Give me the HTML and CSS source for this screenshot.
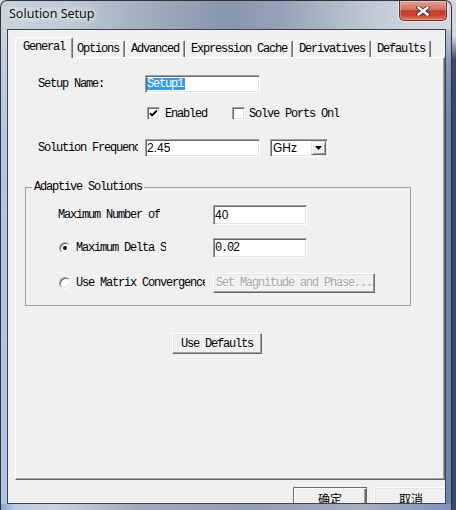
FILE: index.html
```html
<!DOCTYPE html>
<html lang="en">
<head>
  <meta charset="UTF-8" />
  <title>Solution Setup</title>
  <link rel="stylesheet" href="styles.css">
</head>
<body>

  <div class="window">
    <div class="titlebar">
      <span class="title">Solution Setup</span>
      <span class="close">
        <svg width="14" height="10" viewBox="0 0 14 10">
          <path d="M2.5 1.5 L11.5 8.5 M11.5 1.5 L2.5 8.5" stroke="#3c3c3c" stroke-width="4.2" stroke-linecap="square"/>
          <path d="M2.5 1.5 L11.5 8.5 M11.5 1.5 L2.5 8.5" stroke="#fff" stroke-width="2.4" stroke-linecap="square"/>
        </svg>
      </span>
    </div>

    <div class="frame-body">
      <div class="side-left"></div>

      <div class="client">
        <div class="tabs">
          <div class="tab active">General</div>
          <div class="tab">Options</div>
          <div class="tab">Advanced</div>
          <div class="tab">Expression Cache</div>
          <div class="tab">Derivatives</div>
          <div class="tab">Defaults</div>
        </div>

        <div class="panel">
          <div class="row r-name">
            <span class="lbl">Setup Name:</span>
            <div class="edit w115"><span class="sel">Setup1</span></div>
          </div>

          <div class="row r-checks">
            <span class="check on">
              <svg width="11" height="11" viewBox="0 0 11 11"><polyline points="2,5 4,7.5 9,2.5" fill="none" stroke="#000" stroke-width="1.8"/></svg>
            </span>
            <span>Enabled</span>
            <span class="check second"></span>
            <span class="clip">Solve Ports Onl</span>
          </div>

          <div class="row r-freq">
            <span class="lbl clip w100">Solution Frequenc</span>
            <div class="edit w115"><span class="sans">2.45</span></div>
            <div class="combo">
              <span class="sans">GHz</span>
              <span class="drop">
                <svg width="7" height="4" viewBox="0 0 7 4"><polygon points="0,0 7,0 3.5,4" fill="#000"/></svg>
              </span>
            </div>
          </div>

          <fieldset class="group">
            <legend>Adaptive Solutions</legend>

            <div class="row g-row ga">
              <div class="opt"><span class="clip">Maximum Number of</span></div>
              <div class="edit w94 h20"><span class="sans">40</span></div>
            </div>

            <div class="row g-row gb">
              <div class="opt">
                <span class="radio on"></span>
                <span class="clip">Maximum Delta S</span>
              </div>
              <div class="edit w94 h20"><span>0.02</span></div>
            </div>

            <div class="row g-row gc">
              <div class="opt">
                <span class="radio"></span>
                <span class="clip w129">Use Matrix Convergence</span>
              </div>
              <button class="btn btn-disabled">Set Magnitude and Phase...</button>
            </div>
          </fieldset>

          <button class="btn btn-defaults">Use Defaults</button>
        </div>

        <div class="dlg">
          <button class="btn btn-default zh">确定</button>
          <button class="btn zh">取消</button>
        </div>
      </div>

      <div class="side-right"></div>
    </div>

    <div class="frame-bottom"></div>
  </div>

</body>
</html>
```

FILE: styles.css
```css
* {
  box-sizing: border-box;
}

body {
  margin: 0;
  width: 456px;
  height: 510px;
  overflow: hidden;
  background: linear-gradient(#d3d8de 0, #d3d8de 36px, #3b4564 60px, #3b4564 100%);
  font-family: "Liberation Mono", monospace;
  font-size: 12px;
  letter-spacing: -1.2px;
  color: #000;
}

/* window frame */
.window {
  width: 452px;
  height: 510px;
  display: flex;
  flex-direction: column;
  border: 1px solid #2f343c;
  border-bottom: none;
  border-radius: 7px 7px 0 0;
  overflow: hidden;
  background: linear-gradient(90deg, #c9d2dc 0%, #bfc9d4 15%, #9ca9bb 35%, #8896ad 50%, #95a2b6 62%, #b7c1cd 78%, #ccd4dd 90%, #d4dae1 100%);
}

.titlebar {
  display: flex;
  height: 28px;
  flex-shrink: 0;
}

.title {
  margin: 5px 0 0 8px;
  font-family: "Noto Sans", sans-serif;
  font-size: 12.5px;
  line-height: 16px;
  letter-spacing: 0;
  color: #101010;
  text-shadow: 0 0 6px #fff, 0 0 10px rgba(255, 255, 255, 0.9);
}

.close {
  margin-left: auto;
  margin-right: 4px;
  width: 48px;
  height: 20px;
  display: flex;
  align-items: center;
  justify-content: center;
  border: 1px solid #6e2a1f;
  border-top: none;
  border-radius: 0 0 5px 5px;
  background: linear-gradient(#e6a497, #d66f5c 45%, #c13d27 52%, #c6452e 75%, #dc7a56);
  box-shadow: 0 0 0 1px rgba(255, 255, 255, 0.5), inset 0 0 0 1px rgba(255, 255, 255, 0.25);
}

.close svg {
  display: block;
}

.frame-body {
  display: flex;
  flex: 1;
  min-height: 0;
}

.side-left {
  width: 6px;
  flex-shrink: 0;
  background: linear-gradient(#c8d2dc, #b4c8df 20%, #abc4e2);
}

.side-right {
  width: 5px;
  flex-shrink: 0;
  background: linear-gradient(#b9c3d2, #7f93bd 8%, #6d83b2 20%, #6d83b2);
}

.frame-bottom {
  height: 6px;
  flex-shrink: 0;
  background: linear-gradient(90deg, #8aa6c8 0, #b9cbe0 3%, #c9d3de 12%, #9fabbd 30%, #8f9db3 55%, #a4b0c1 80%, #7f93bb 100%);
}

.client {
  width: 439px;
  flex-shrink: 0;
  border: 1px solid #3c4350;
  background: #f0f0f0;
  overflow: hidden;
}

/* tabs */
.tabs {
  display: flex;
  align-items: flex-end;
  height: 20px;
  margin: 7px 0 0 9px;
}

.tab {
  flex-shrink: 0;
  height: 17px;
  padding: 0 5px;
  line-height: 16px;
  white-space: nowrap;
  border-top: 1px solid #fff;
  border-left: 1px solid #fff;
  border-right: 1px solid #696969;
  border-radius: 2px 2px 0 0;
  box-shadow: inset -1px 0 #a0a0a0;
  background: #f0f0f0;
}

.tab.active {
  position: relative;
  z-index: 1;
  height: 21px;
  margin: 0 -2px -1px;
  padding: 0 7px;
  line-height: 18px;
}

.panel {
  margin-left: 7px;
  width: 430px;
  height: 423px;
  border: 1px solid;
  border-color: #fff #696969 #696969 #fff;
  box-shadow: inset -1px -1px #a0a0a0;
}

/* form rows */
.row {
  display: flex;
  align-items: center;
}

.r-name {
  margin: 17px 0 0 22px;
  height: 18px;
}

.r-checks {
  margin: 14px 0 0 131px;
  height: 13px;
}

.r-freq {
  margin: 19px 0 0 22px;
  height: 18px;
}

.lbl {
  width: 107px;
  flex-shrink: 0;
}

.lbl.clip {
  width: 100px;
  margin-right: 7px;
}

.clip {
  overflow: hidden;
  white-space: nowrap;
  flex-shrink: 0;
}

.w100 { width: 100px; }
.w129 { width: 129px; }

.sans {
  font-family: "Liberation Sans", Arial, sans-serif;
  letter-spacing: 0;
}

.edit {
  display: flex;
  align-items: center;
  height: 18px;
  padding-left: 1px;
  background: #fff;
  border: 1px solid;
  border-color: #a0a0a0 #fff #fff #a0a0a0;
  box-shadow: inset 1px 1px #696969, inset -1px -1px #e3e3e3;
  white-space: nowrap;
  flex-shrink: 0;
}

.w115 { width: 115px; }
.w94 { width: 94px; }
.h20 { height: 20px; }

.sel {
  background: #3399ff;
  color: #fff;
  line-height: 12px;
  padding-right: 2px;
}

.check {
  width: 13px;
  height: 13px;
  margin-right: 5px;
  display: flex;
  align-items: center;
  justify-content: center;
  background: #fff;
  border: 1px solid;
  border-color: #a0a0a0 #fff #fff #a0a0a0;
  box-shadow: inset 1px 1px #696969, inset -1px -1px #e3e3e3;
}

.check.second {
  margin-left: 25px;
  margin-right: 4px;
}

.radio {
  width: 12px;
  height: 12px;
  margin: 0 5px 0 1px;
  flex-shrink: 0;
  display: flex;
  align-items: center;
  justify-content: center;
  border-radius: 50%;
  background: #fff;
  border: 1px solid;
  border-color: #a0a0a0 #fff #fff #a0a0a0;
  box-shadow: inset 1px 1px #696969, inset -1px -1px #e3e3e3;
}

.radio.on::after {
  content: "";
  width: 4px;
  height: 4px;
  border-radius: 50%;
  background: #000;
}

.combo {
  display: flex;
  align-items: center;
  margin-left: 10px;
  width: 58px;
  height: 18px;
  padding-left: 2px;
  background: #fff;
  border: 1px solid;
  border-color: #a0a0a0 #fff #fff #a0a0a0;
  box-shadow: inset 1px 1px #696969, inset -1px -1px #e3e3e3;
}

.drop {
  margin: 0 1px 0 auto;
  width: 15px;
  height: 14px;
  display: flex;
  align-items: center;
  justify-content: center;
  background: #f0f0f0;
  border: 1px solid;
  border-color: #e3e3e3 #696969 #696969 #e3e3e3;
  box-shadow: inset 1px 1px #fff, inset -1px -1px #a0a0a0;
}

.drop svg {
  display: block;
}

/* group box */
.group {
  margin: 23px 0 0 9px;
  width: 386px;
  min-width: 0;
  padding: 0 0 12px;
  border: 1px solid #a0a0a0;
}

.group legend {
  margin-left: 6px;
  padding: 0 2px;
  line-height: 14px;
}

.g-row {
  margin-left: 32px;
  height: 20px;
}

.ga { margin-top: 11px; }
.gb { margin-top: 13px; }
.gc { margin-top: 15px; }

.opt {
  width: 155px;
  flex-shrink: 0;
  display: flex;
  align-items: center;
}

/* buttons */
.btn {
  display: block;
  padding: 0;
  font: inherit;
  letter-spacing: inherit;
  color: #000;
  background: #f0f0f0;
  border: 1px solid;
  border-color: #fff #696969 #696969 #fff;
  box-shadow: inset -1px -1px #a0a0a0, inset 1px 1px #e3e3e3;
  white-space: nowrap;
}

.btn-disabled {
  width: 162px;
  height: 20px;
  color: #a8a8a8;
  text-shadow: 1px 1px #fff;
}

.btn-defaults {
  margin: 27px 0 0 156px;
  width: 90px;
  height: 21px;
}

.dlg {
  display: flex;
  gap: 7px;
  margin: 7px 0 0 285px;
}

.dlg .btn {
  flex-shrink: 0;
  width: 74px;
  height: 23px;
}

.btn-default {
  border-color: #696969;
  box-shadow: inset 1px 1px #fff, inset -1px -1px #696969, inset -2px -2px #a0a0a0;
}

.zh {
  font-family: "Noto Sans CJK SC", sans-serif;
  letter-spacing: 0;
}
```
